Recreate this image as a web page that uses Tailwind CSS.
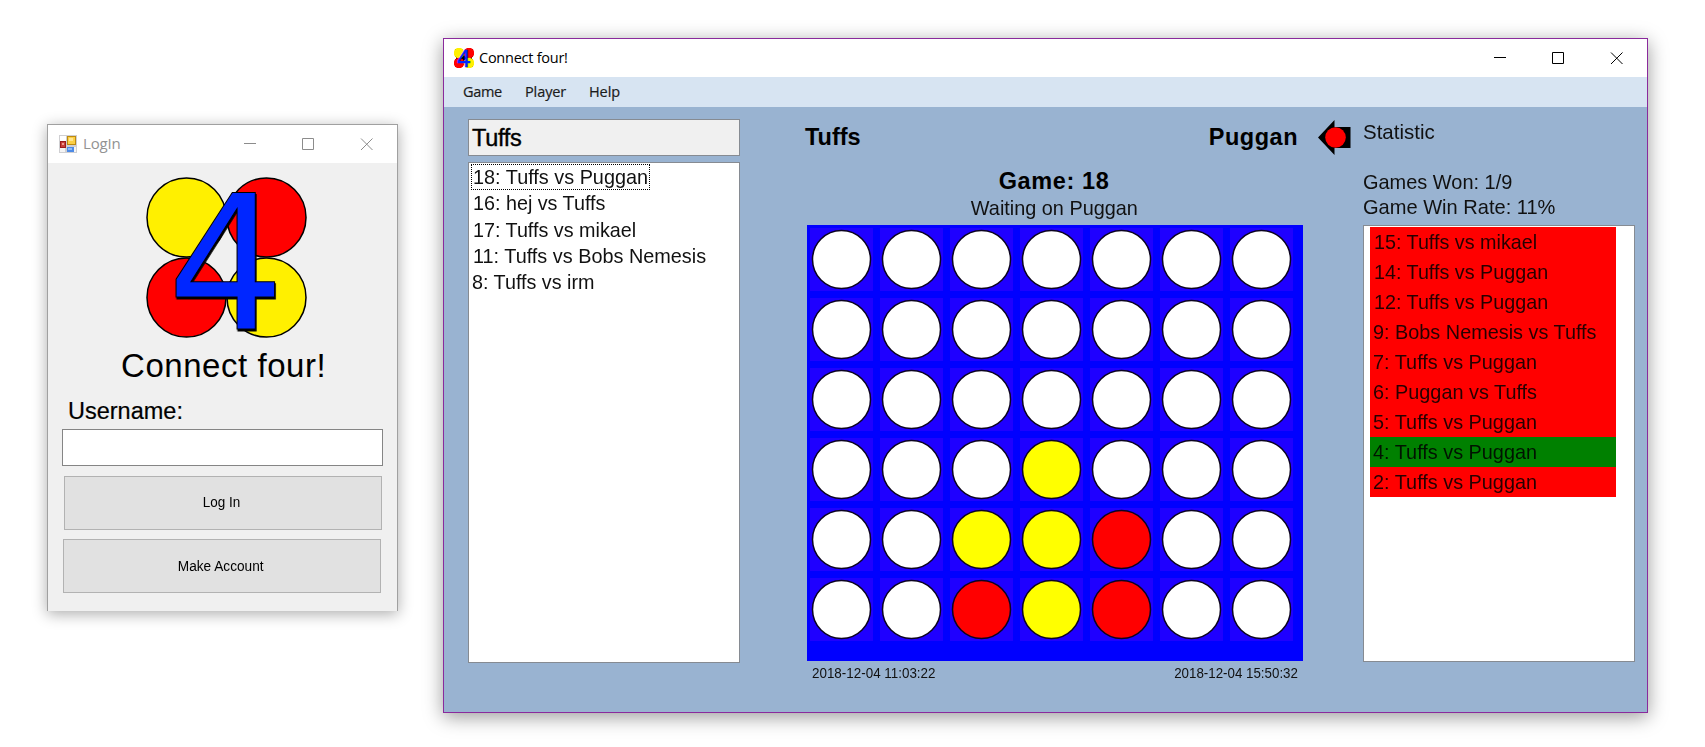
<!DOCTYPE html>
<html lang="en">
<head>
<meta charset="utf-8">
<title>Connect four!</title>
<script src="https://cdn.jsdelivr.net/npm/@tailwindcss/browser@4"></script>
</head>
<body class="flex h-[747px] w-[1705px] items-start overflow-hidden bg-white font-['Liberation_Sans',sans-serif] leading-none text-black">

<!-- Login window -->
<section class="mt-[124px] ml-[47px] flex h-[487px] w-[351px] shrink-0 flex-col border border-b-0 border-[#a0a0a0] bg-[#f0f0f0] shadow-[0_3px_14px_rgba(0,0,0,0.33)]">
  <header class="flex h-[38px] shrink-0 items-center bg-white pl-[11px]">
    <svg class="h-[18px] w-[18px]" viewBox="0 0 18 18">
      <rect width="18" height="18" fill="#cfcfd2"/>
      <rect x="1" y="1" width="6" height="5" fill="#fff"/><rect x="1" y="13" width="5" height="4" fill="#f4f4f4"/><rect x="15" y="12" width="2" height="5" fill="#f4f4f4"/>
      <rect x="8.5" y="1.5" width="8" height="8" fill="#fbcf45" stroke="#bd8a10"/><rect x="10" y="3" width="4" height="3" fill="#ffe590"/>
      <rect x="1.5" y="6.5" width="5" height="6" fill="#c8403a" stroke="#9b1c1c"/><rect x="3" y="8" width="2" height="2" fill="#ef9a90"/>
      <rect x="8" y="12" width="7" height="5" fill="#4d8ae6"/><rect x="9" y="13" width="4" height="2" fill="#8dbdf8"/>
    </svg>
    <h1 class="ml-[6px] w-[161px] shrink-0 pb-px font-['Open_Sans',sans-serif] text-[15px] tracking-[-0.2px] text-[#929292]">LogIn</h1>
    <svg class="h-[13px] w-[130px] shrink-0" viewBox="0 0 130 13" fill="none" stroke="#8c8c8c">
      <path d="M0 5.500h12M58.500 .5h11v11h-11zM117 .5l11.500 11.500M128.500 .5L117 12"/>
    </svg>
  </header>
  <div class="flex grow flex-col">
    <svg class="mt-[14px] ml-[98px] h-[162px] w-[162px] shrink-0" viewBox="0 0 162 162">
      <filter id="edge" x="-10%" y="-10%" width="120%" height="120%"><feDropShadow dx="0.8" dy="2" stdDeviation="0.5" flood-color="#000"/></filter>
      <g stroke="#000" stroke-width="1.500">
        <circle cx="40.500" cy="40.500" r="39.500" fill="#fff000"/><circle cx="120.500" cy="40.500" r="39.500" fill="#f00"/>
        <circle cx="40.500" cy="120.500" r="39.500" fill="#f00"/><circle cx="120.500" cy="120.500" r="39.500" fill="#fff000"/>
      </g>
      <text filter="url(#edge)" x="21" y="151.500" font-family="DejaVu Sans" font-size="188" textLength="118" lengthAdjust="spacingAndGlyphs" fill="#0026ff" stroke="#000">4</text>
    </svg>
    <h2 class="mt-[10px] ml-[73px] text-[33px] tracking-[0.55px] whitespace-nowrap">Connect four!</h2>
    <label class="mt-[18px] ml-[20px] text-[23.500px] tracking-[0px] [-webkit-text-stroke:0.2px_#000]">Username:</label>
    <div class="mt-[5px] ml-[14px] h-[37px] w-[321px] shrink-0 border border-[#858585] bg-white"></div>
    <button class="mt-[10px] ml-[16px] h-[54px] w-[318px] shrink-0 border border-[#b2b2b2] bg-[#e1e1e1] pr-[3px] pb-px text-[15.500px]"><span class="inline-block scale-x-[0.87]">Log In</span></button>
    <button class="mt-[9.500px] ml-[15px] h-[54px] w-[318px] shrink-0 border border-[#b2b2b2] bg-[#e1e1e1] pr-[3px] pb-px text-[15.500px]"><span class="inline-block scale-x-[0.88]">Make Account</span></button>
  </div>
</section>

<!-- Game window -->
<section class="mt-[38px] ml-[45px] flex h-[675px] w-[1205px] shrink-0 flex-col border border-[#8a2a9c] bg-[#99b3d1] shadow-[0_4px_18px_rgba(0,0,0,0.4)]">
  <header class="flex h-[38px] shrink-0 items-center bg-white pl-[10px]">
    <svg class="h-[20px] w-[20px]" viewBox="0 0 20 20">
      <path fill="#000" d="M1 1h18v18H1z"/><path fill="#fff" d="M8.500 0h3v3h-3zM8.500 17h3v3h-3zM0 9h2v2H0zM18 9h2v2h-2z"/>
      <circle cx="5" cy="5" r="5.300" fill="#fff000"/><circle cx="15" cy="5" r="5.300" fill="#f00"/>
      <circle cx="5" cy="15" r="5.300" fill="#f00"/><circle cx="15" cy="15" r="5.300" fill="#fff000"/>
      <text x="2.500" y="18.500" font-family="DejaVu Sans" font-size="23" fill="#0026ff" stroke="#0026ff" stroke-width=".4">4</text>
    </svg>
    <h1 class="ml-[5px] w-[1015px] shrink-0 font-['Open_Sans',sans-serif] text-[14.500px] tracking-[-0.25px]">Connect four!</h1>
    <svg class="h-[13px] w-[130px] shrink-0" viewBox="0 0 130 13" fill="none" stroke="#000">
      <path d="M0 5.500h12M58.500 .5h11v11h-11zM117 .5l11.500 11.500M128.500 .5L117 12"/>
    </svg>
  </header>
  <nav class="flex h-[30px] shrink-0 items-center bg-[#d7e4f2] pl-[19px] font-['Open_Sans',sans-serif] text-[14.500px] text-[#1b1b1b] [-webkit-text-stroke:0.2px_#1b1b1b]">
    <span class="w-[62px] tracking-[-0.3px]">Game</span><span class="w-[64px] tracking-[-0.1px]">Player</span><span class="tracking-[-0.1px]">Help</span>
  </nav>

  <main class="flex grow items-start">
    <aside class="ml-[24px] flex w-[272px] shrink-0 flex-col pt-[12px]">
      <div class="h-[37px] border border-[#868b92] bg-[#f0f0f0] pt-[6.500px] pl-[3px] text-[23.500px] tracking-[-0.3px] [-webkit-text-stroke:0.4px_#000]">Tuffs</div>
      <ul class="mt-[6px] h-[501px] border border-[#868b92] bg-white pt-[1px] pl-[2px] text-[21px] leading-[26.300px] whitespace-nowrap text-[#111]">
        <li class="h-[26.300px] w-[179px] outline-1 -outline-offset-1 outline-dotted outline-black"><span class="ml-[2px] inline-block origin-left scale-x-[0.945]">18: Tuffs vs Puggan</span></li>
        <li><span class="ml-[2px] inline-block origin-left scale-x-[0.94]">16: hej vs Tuffs</span></li>
        <li><span class="ml-[2px] inline-block origin-left scale-x-[0.94]">17: Tuffs vs mikael</span></li>
        <li><span class="ml-[2px] inline-block origin-left scale-x-[0.945]">11: Tuffs vs Bobs Nemesis</span></li>
        <li><span class="ml-[1px] inline-block origin-left scale-x-[0.94]">8: Tuffs vs irm</span></li>
      </ul>
    </aside>

    <section class="ml-[67px] w-[496px] shrink-0">
      <div class="flex h-[56px] justify-between pt-[19px] pr-[5px] text-[23.500px] font-bold"><span class="-ml-[2px] tracking-[0px]">Tuffs</span><span class="tracking-[0.5px]">Puggan</span></div>
      <h2 class="h-[31px] pt-[7px] pr-[2px] text-center text-[23.500px] font-bold tracking-[0.6px]">Game: 18</h2>
      <p class="h-[30.500px] pt-[3px] pr-[2px] text-center text-[21px]"><span class="inline-block scale-x-[0.945] text-[#111]">Waiting on Puggan</span></p>
      <div id="board" class="grid h-[436px] grid-cols-[repeat(7,63px)] content-start gap-[7px] bg-[#0000ff] pt-[3px] pl-[3px]"></div>
      <div class="flex justify-between pt-[4px] pr-[5px] pl-[5px] text-[15.500px] text-[#111]"><span class="inline-block origin-left scale-x-[0.865]">2018-12-04 11:03:22</span><span class="inline-block origin-right scale-x-[0.86]">2018-12-04 15:50:32</span></div>
    </section>

    <svg class="mt-[13px] ml-[14px] h-[35px] w-[34px] shrink-0" viewBox="0 0 34 35"><path d="M1 17.500L17.500 0v7H33.500v21H17.500v7z"/><circle cx="18.500" cy="17.500" r="10.300" fill="#f00"/></svg>

    <aside class="ml-[12px] w-[272px] shrink-0 text-[21px] whitespace-nowrap text-[#111]">
      <p class="h-[65px] pt-[14px]"><span class="inline-block origin-left scale-x-[0.975]">Statistic</span></p>
      <p class="-mt-px h-[24.500px]"><span class="inline-block origin-left scale-x-[0.95]">Games Won: 1/9</span></p>
      <p class="h-[29px]"><span class="inline-block origin-left scale-x-[0.955]">Game Win Rate: 11%</span></p>
      <div class="h-[437px] border border-[#868b92] bg-white pt-px pl-[6px]">
        <ul class="w-[246px] bg-[#ff0000] leading-[30px] text-black/85">
          <li class="h-[30px] pl-[4px]"><span class="inline-block origin-left scale-x-[0.94]">15: Tuffs vs mikael</span></li>
          <li class="h-[30px] pl-[4px]"><span class="inline-block origin-left scale-x-[0.94]">14: Tuffs vs Puggan</span></li>
          <li class="h-[30px] pl-[4px]"><span class="inline-block origin-left scale-x-[0.94]">12: Tuffs vs Puggan</span></li>
          <li class="h-[30px] pl-[3px]"><span class="inline-block origin-left scale-x-[0.945]">9: Bobs Nemesis vs Tuffs</span></li>
          <li class="h-[30px] pl-[3px]"><span class="inline-block origin-left scale-x-[0.945]">7: Tuffs vs Puggan</span></li>
          <li class="h-[30px] pl-[3px]"><span class="inline-block origin-left scale-x-[0.945]">6: Puggan vs Tuffs</span></li>
          <li class="h-[30px] pl-[3px]"><span class="inline-block origin-left scale-x-[0.945]">5: Tuffs vs Puggan</span></li>
          <li class="h-[30px] bg-[#008000] pl-[3px]"><span class="inline-block origin-left scale-x-[0.945]">4: Tuffs vs Puggan</span></li>
          <li class="h-[30px] pl-[3px]"><span class="inline-block origin-left scale-x-[0.945]">2: Tuffs vs Puggan</span></li>
        </ul>
      </div>
    </aside>
  </main>
</section>

<script>
  // One string per board row: "." empty, "y" yellow, "r" red
  const rows = [".......", ".......", ".......", "...y...", "..yyr..", "..ryr.."];
  const fills = { ".": "fill-white", y: "fill-[#ffff00]", r: "fill-[#ff0000]" };
  document.getElementById("board").innerHTML = rows.join("").split("").map(c =>
    `<svg class="size-[63px] bg-[#1f00ff] stroke-[#0c0420] stroke-[1.5px] ${fills[c]}" viewBox="0 0 63 63"><circle cx="31.500" cy="31.500" r="29"/></svg>`
  ).join("");
</script>
</body>
</html>
